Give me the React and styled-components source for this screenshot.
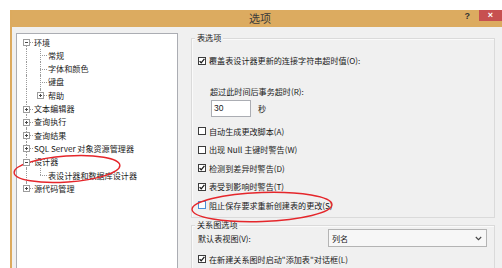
import React from 'react';
import styled, { createGlobalStyle } from 'styled-components';

const GlobalStyle = createGlobalStyle`
  html, body {
    margin: 0;
    padding: 0;
    background: #fff;
  }
  body {
    font-family: "Noto Sans CJK SC", "Noto Sans", sans-serif;
    color: #1a1a1a;
  }
`;

const Stage = styled.div`
  position: relative;
  width: 502px;
  height: 268px;
  overflow: hidden;
  padding: 10px 0 0 10px;
  box-sizing: border-box;
`;

const Window = styled.div`
  width: 498px;
  height: 258px;
  display: flex;
  flex-direction: column;
  border-left: 2px solid #dcaa5e;
  background: #f0f0f0;
  box-sizing: border-box;
`;

const TitleBar = styled.div`
  height: 17px;
  flex: none;
  display: grid;
  grid-template-columns: 1fr auto 1fr;
  align-items: center;
  background: #dcab60;
`;

const Title = styled.div`
  grid-column: 2;
  font-size: 11px;
  line-height: 17px;
  color: #3a3a3a;
`;

const Controls = styled.div`
  grid-column: 3;
  justify-self: end;
  align-self: start;
  display: flex;
  align-items: flex-start;
`;

const HelpButton = styled.div`
  font-family: "Liberation Sans", sans-serif;
  font-size: 9px;
  font-weight: bold;
  line-height: 11px;
  color: #333;
  margin: 1px 9px 0 0;
`;

const CloseButton = styled.div`
  width: 29px;
  height: 11px;
  background: #c75050;
  color: #fff;
  font-family: "Liberation Sans", sans-serif;
  font-size: 9px;
  font-weight: bold;
  line-height: 11px;
  text-align: center;
  padding-right: 6px;
  box-sizing: border-box;
`;

const Body = styled.div`
  flex: 1;
  display: flex;
  align-items: flex-start;
`;

const TreePanel = styled.div`
  width: 162px;
  height: 245px;
  margin: 6px 0 0 4px;
  flex: none;
  background: #fff;
  border: 1px solid #abadb3;
  box-sizing: border-box;
  padding: 1.4px 0 0 2px;
`;

const TreeRow = styled.div`
  height: 13.3px;
  display: flex;
  align-items: center;
`;

const LineCell = styled.div`
  position: relative;
  width: 14px;
  height: 100%;
  flex: none;

  &::before {
    content: '';
    display: ${p => (p.$v ? 'block' : 'none')};
    position: absolute;
    left: 7px;
    top: ${p => (p.$v === 'down' ? '50%' : '0')};
    bottom: ${p => (p.$v === 'up' ? '50%' : '0')};
    border-left: 1px dotted #9a9a9a;
  }

  &::after {
    content: '';
    display: ${p => (p.$h ? 'block' : 'none')};
    position: absolute;
    left: 7px;
    width: 7px;
    top: 50%;
    border-top: 1px dotted #9a9a9a;
  }
`;

const Expander = styled.span`
  position: absolute;
  z-index: 1;
  left: 4px;
  top: calc(50% - 3px);
  width: 7px;
  height: 7px;
  box-sizing: border-box;
  border: 1px solid #9c9c9c;
  background: #fff;

  &::before {
    content: '';
    position: absolute;
    left: 1px;
    right: 1px;
    top: 2px;
    border-top: 1px solid #4a4a4a;
  }

  &::after {
    content: '';
    display: ${p => (p.$open ? 'none' : 'block')};
    position: absolute;
    top: 1px;
    bottom: 1px;
    left: 2px;
    border-left: 1px solid #4a4a4a;
  }
`;

const NodeText = styled.span`
  margin-left: 1px;
  font-size: 8.1px;
  line-height: 13px;
  white-space: nowrap;
`;

const RightColumn = styled.div`
  width: 304px;
  flex: none;
  margin: 11px 0 0 13px;
`;

const Group = styled.div`
  position: relative;
  border: 1px solid #dadada;
  box-shadow: inset 1px 1px 0 #fafafa;
  box-sizing: border-box;
  height: ${p => p.$height}px;
  margin-top: ${p => p.$gap || 0}px;
  padding: ${p => p.$pad};
`;

const Legend = styled.div`
  position: absolute;
  top: -7.5px;
  left: 3px;
  padding: 0 2px;
  background: #f0f0f0;
  font-size: 8.1px;
  line-height: 11px;
  white-space: nowrap;
`;

const CheckRow = styled.div`
  height: ${p => p.$h || 13}px;
  margin-top: ${p => p.$mt || 0}px;
  display: flex;
  align-items: center;
  gap: 3px;
`;

const Box = styled.span`
  width: 8px;
  height: 8px;
  flex: none;
  box-sizing: border-box;
  border: 1px solid ${p => (p.$focus ? '#4a90d9' : '#3c3c3c')};
  background: #fff;
  display: flex;
  align-items: center;
  justify-content: center;
`;

const Label = styled.span`
  font-size: 8.1px;
  line-height: 13px;
  white-space: nowrap;
`;

const SubLabel = styled.div`
  height: 13px;
  margin-top: 17.5px;
  padding-left: 12px;
  font-size: 8.1px;
  line-height: 13px;
  white-space: nowrap;
`;

const InputRow = styled.div`
  height: 17px;
  margin-top: 2.5px;
  padding-left: 13px;
  display: flex;
  align-items: center;
  gap: 7px;
`;

const NumberBox = styled.div`
  width: 40px;
  height: 17px;
  box-sizing: border-box;
  border: 1px solid #abadb3;
  background: #fff;
  padding-left: 2px;
  font-family: "Liberation Sans", sans-serif;
  font-size: 8.5px;
  line-height: 15px;
`;

const CheckList = styled.div`
  margin-top: 4.75px;
`;

const SelectRow = styled.div`
  height: 18px;
  display: flex;
  align-items: center;
  justify-content: space-between;
`;

const Select = styled.div`
  width: 159px;
  height: 18px;
  box-sizing: border-box;
  border: 1px solid #b4b4b4;
  background: #f7f7f7;
  display: flex;
  align-items: center;
  justify-content: space-between;
  padding: 0 4px 0 3px;
  font-size: 8.1px;
`;

const Overlay = styled.svg`
  position: absolute;
  left: 0;
  top: 0;
  pointer-events: none;
`;

const Check = () => (
  <svg width="6" height="6" viewBox="0 0 6 6">
    <path d="M0.6 3.1 L2.2 4.8 L5.4 0.9" fill="none" stroke="#1a1a1a" strokeWidth="1.3" />
  </svg>
);

const Chevron = () => (
  <svg width="7" height="5" viewBox="0 0 7 5">
    <path d="M0.8 1 L3.5 3.7 L6.2 1" fill="none" stroke="#444" strokeWidth="1.1" />
  </svg>
);

// cells: one entry per indent level -> [vertical, horizontal, expander]
const treeData = [
  { text: '环境', cells: [['down', true, 'open']] },
  { text: '常规', cells: [['full'], ['full', true]] },
  { text: '字体和颜色', cells: [['full'], ['full', true]] },
  { text: '键盘', cells: [['full'], ['full', true]] },
  { text: '帮助', cells: [['full'], ['up', true, 'closed']] },
  { text: '文本编辑器', cells: [['full', true, 'closed']] },
  { text: '查询执行', cells: [['full', true, 'closed']] },
  { text: '查询结果', cells: [['full', true, 'closed']] },
  { text: 'SQL Server 对象资源管理器', cells: [['full', true, 'closed']] },
  { text: '设计器', cells: [['full', true, 'open']] },
  { text: '表设计器和数据库设计器', cells: [['full'], ['up', true]] },
  { text: '源代码管理', cells: [['up', true, 'closed']] },
];

const tableOptions = [
  { text: '自动生成更改脚本(A)', checked: false },
  { text: '出现 Null 主键时警告(W)', checked: false },
  { text: '检测到差异时警告(D)', checked: true },
  { text: '表受到影响时警告(T)', checked: true },
  { text: '阻止保存要求重新创建表的更改(S)', checked: false, focus: true },
];

const CheckItem = ({ checked, focus, children, ...rest }) => (
  <CheckRow {...rest}>
    <Box $focus={focus}>{checked && <Check />}</Box>
    <Label>{children}</Label>
  </CheckRow>
);

export default function App() {
  return (
    <>
      <GlobalStyle />
      <Stage>
        <Window>
          <TitleBar>
            <Title>选项</Title>
            <Controls>
              <HelpButton>?</HelpButton>
              <CloseButton>×</CloseButton>
            </Controls>
          </TitleBar>
          <Body>
            <TreePanel>
              {treeData.map(node => (
                <TreeRow key={node.text}>
                  {node.cells.map(([v, h, exp], i) => (
                    <LineCell key={i} $v={v} $h={h}>
                      {exp && <Expander $open={exp === 'open'} />}
                    </LineCell>
                  ))}
                  <NodeText>{node.text}</NodeText>
                </TreeRow>
              ))}
            </TreePanel>
            <RightColumn>
              <Group $height={180} $pad="15px 6px 0 6px">
                <Legend>表选项</Legend>
                <CheckItem checked>覆盖表设计器更新的连接字符串超时值(O):</CheckItem>
                <SubLabel>超过此时间后事务超时(R):</SubLabel>
                <InputRow>
                  <NumberBox>30</NumberBox>
                  <Label>秒</Label>
                </InputRow>
                <CheckList>
                  {tableOptions.map(o => (
                    <CheckItem key={o.text} $h={18.5} checked={o.checked} focus={o.focus}>
                      {o.text}
                    </CheckItem>
                  ))}
                </CheckList>
              </Group>
              <Group $height={60} $gap={7} $pad="3px 7px 0 6px">
                <Legend>关系图选项</Legend>
                <SelectRow>
                  <Label>默认表视图(V):</Label>
                  <Select>
                    <span>列名</span>
                    <Chevron />
                  </Select>
                </SelectRow>
                <CheckItem $mt={5.5} checked>在新建关系图时启动"添加表"对话框(L)</CheckItem>
              </Group>
            </RightColumn>
          </Body>
        </Window>
        <Overlay width="502" height="268">
          <ellipse cx="67" cy="169" rx="53" ry="13" transform="rotate(-4 67 169)" fill="none" stroke="#e5262b" strokeWidth="1.4" />
          <ellipse cx="262" cy="207" rx="70" ry="14.5" transform="rotate(-2 262 207)" fill="none" stroke="#e5262b" strokeWidth="1.4" />
        </Overlay>
      </Stage>
    </>
  );
}
